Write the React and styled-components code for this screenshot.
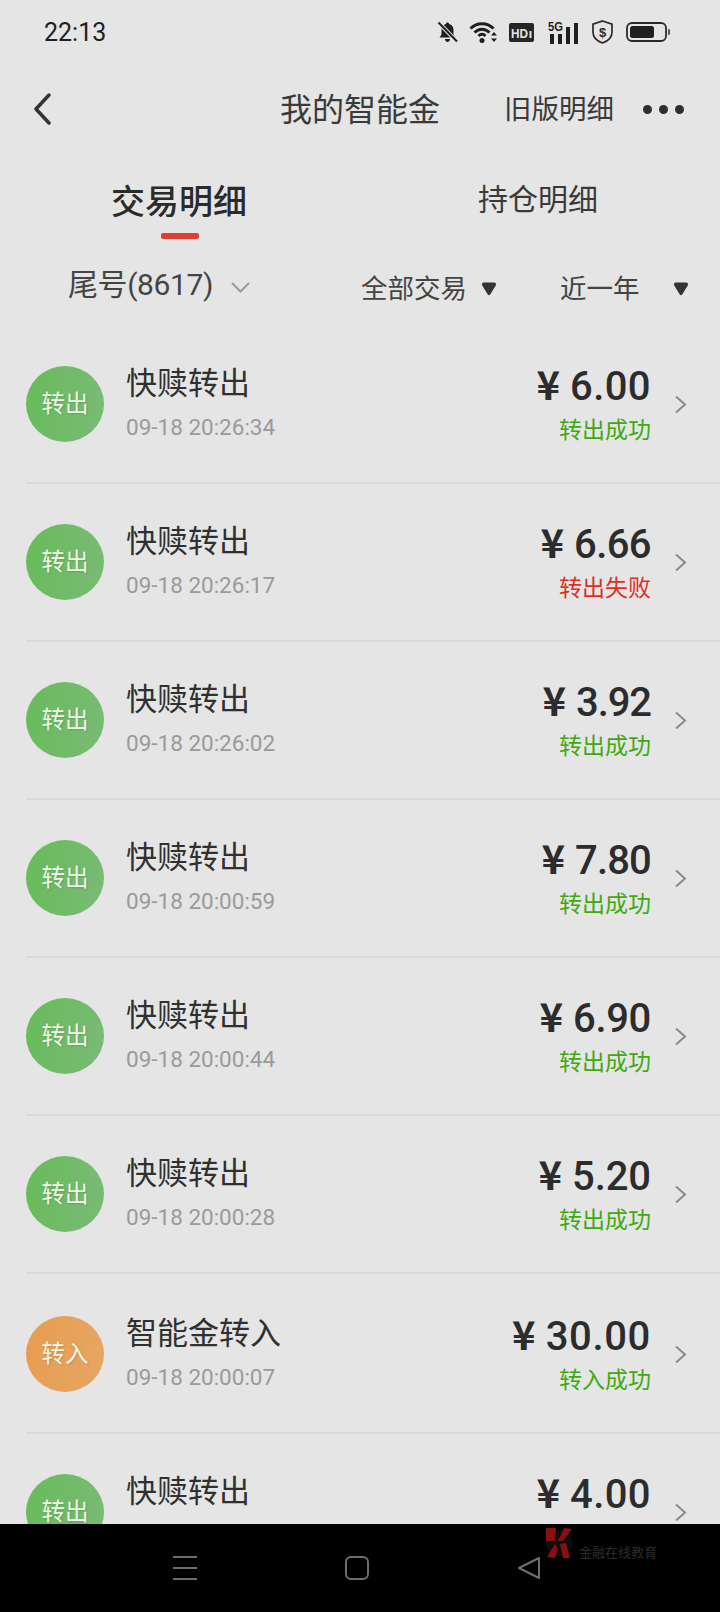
import React from "react";
import styled, { createGlobalStyle } from "styled-components";

const Global = createGlobalStyle`
  html, body { margin: 0; padding: 0; background: #e5e5e5; }
  body { font-family: Roboto, "Noto Sans CJK SC", sans-serif; }
`;

const Phone = styled.div`
  width: 720px; height: 1612px; display: flex; flex-direction: column;
  overflow: hidden; background: #e5e5e5; color: #2e2e2e;
`;
const StatusBar = styled.div`
  height: 64px; flex: none; display: flex; align-items: center;
  justify-content: space-between; padding: 1px 50px 0 44px; box-sizing: border-box;
`;
const Clock = styled.span`font-size: 25px; line-height: 63px; color: #1f1f1f; letter-spacing: 0;`;
const StatusIcons = styled.div`display: flex; align-items: center; margin-top: -1px;`;
const StatusSvg = styled.svg`display: block; margin-left: ${(p) => p.$gap || 0}px; flex: none;`;

const Header = styled.div`
  height: 90px; flex: none; display: flex; align-items: center; position: relative;
  padding: 0 36px 0 33px; box-sizing: border-box;
`;
const BackBtn = styled.svg`display: block; flex: none;`;
const HeaderTitle = styled.div`
  margin-left: 229px; font-size: 32px; line-height: 40px; color: #3a3a3a; white-space: nowrap;
  transform: translateY(1px);
`;
const OldLink = styled.div`
  margin-left: 64px; font-size: 27.5px; line-height: 40px; color: #3a3a3a; white-space: nowrap;
  transform: translateY(1px);
`;
const Dots = styled.div`
  margin-left: 29px; display: flex; gap: 7px; align-items: center;
`;
const Dot = styled.span`width: 9px; height: 9px; border-radius: 50%; background: #2e2e2e;`;

const Tabs = styled.div`height: 86px; flex: none; display: flex; position: relative;`;
const Tab = styled.div`
  position: absolute; top: ${(p) => p.$top}px; left: ${(p) => p.$left}px;
  font-size: ${(p) => (p.$active ? 34 : 30)}px; font-weight: ${(p) => (p.$active ? 500 : 400)};
  line-height: 40px; white-space: nowrap; color: ${(p) => (p.$active ? "#2b2b2b" : "#3a3a3a")};
`;
const TabMark = styled.div`
  position: absolute; left: 161px; top: 79px; width: 38px; height: 6px;
  border-radius: 2px; background: #dc4030;
`;

const Filters = styled.div`
  height: 86px; flex: none; display: flex; align-items: center; box-sizing: border-box;
  padding: 12px 32px 0 68px;
`;
const Account = styled.div`
  font-size: 30px; line-height: 40px; color: #444; white-space: nowrap; letter-spacing: -0.4px;
  margin-top: -8px;
`;
const AccountCaret = styled.svg`display: block; margin: -4px 0 0 18px; flex: none;`;
const FilterText = styled.div`
  margin-left: ${(p) => p.$ml}px; font-size: 26.5px; line-height: 36px; color: #444; white-space: nowrap;
`;
const FilterTri = styled.svg`display: block; margin-left: ${(p) => p.$ml}px; flex: none;`;

const List = styled.div`flex: 1; min-height: 0; overflow: hidden; padding-left: 26px;`;
const Row = styled.div`
  height: ${(p) => (p.$tall ? 160 : 158)}px; box-sizing: border-box; flex: none;
  padding-top: ${(p) => (p.$tall ? 42 : 40)}px; display: flex; align-items: flex-start;
  border-bottom: 2px solid #d9d9d9;
`;
const Badge = styled.div`
  width: 78px; height: 76px; border-radius: 50%; flex: none; display: flex;
  align-items: center; justify-content: center; font-size: 23.5px; line-height: 30px; color: #eef5e9;
  text-shadow: 1px 1px 2px rgba(0,0,0,.14);
  background: ${(p) => p.$in
    ? "linear-gradient(100deg,#e79d4f,#e6a665)"
    : "linear-gradient(100deg,#68bb59,#7abb78)"};
`;
const Info = styled.div`margin-left: 22px; margin-top: -1px; flex: 1; min-width: 0;`;
const Name = styled.div`font-size: 31px; line-height: 38px; color: #303030; white-space: nowrap;`;
const Time = styled.div`margin-top: 11px; font-size: 22.5px; line-height: 26px; color: #9a9a9a; white-space: nowrap;`;
const Right = styled.div`
  display: flex; flex-direction: column; align-items: flex-end; margin-top: -6px; flex: none;
`;
const Amount = styled.div`
  font-size: 40px; line-height: 46px; color: #2c2c2c; white-space: nowrap; font-weight: 500;
  letter-spacing: ${(p) => 0.4 - (p.$track || 0) / 4}px;
`;
const Yen = styled.span`
  margin-right: 10px; font-family: "Noto Sans CJK SC", sans-serif; font-weight: 700; letter-spacing: 0;
`;
const Status = styled.div`
  margin-top: 6px; font-size: 23px; line-height: 30px; white-space: nowrap;
  color: ${(p) => (p.$fail ? "#de2f25" : "#3fa90f")};
`;
const Chevron = styled.svg`display: block; margin: 29px 33px 0 23px; flex: none;`;

const NavBar = styled.div`
  height: 88px; flex: none; background: #000; position: relative; display: flex;
  align-items: flex-start; padding: 32px 0 0 173px; box-sizing: border-box;
`;
const NavIcon = styled.svg`display: block; flex: none; margin-right: ${(p) => p.$mr || 0}px;`;
const Watermark = styled.div`
  position: absolute; left: 545px; top: 3px; display: flex; align-items: flex-end;
`;
const WatermarkText = styled.span`
  margin-left: 7px; margin-bottom: -3px; font-size: 13px; line-height: 18px; color: #2c2c2c; letter-spacing: 0;
  white-space: nowrap;
`;

const rows = [
  { name: "快赎转出", time: "09-18 20:26:34", amount: "6.00", status: "转出成功", track: 0 },
  { name: "快赎转出", time: "09-18 20:26:17", amount: "6.66", status: "转出失败", fail: true, track: 4 },
  { name: "快赎转出", time: "09-18 20:26:02", amount: "3.92", status: "转出成功", track: 6 },
  { name: "快赎转出", time: "09-18 20:00:59", amount: "7.80", status: "转出成功", track: 5 },
  { name: "快赎转出", time: "09-18 20:00:44", amount: "6.90", status: "转出成功", track: 3 },
  { name: "快赎转出", time: "09-18 20:00:28", amount: "5.20", status: "转出成功", track: 2 },
  { name: "智能金转入", time: "09-18 20:00:07", amount: "30.00", status: "转入成功", track: -1 },
  { name: "快赎转出", amount: "4.00", track: 0 },
];

export default function App() {
  return (
    <Phone>
      <Global />
      <StatusBar>
        <Clock>22:13</Clock>
        <StatusIcons>
          <StatusSvg width="21" height="22" viewBox="0 0 21 22">
            <path d="M10.500 1.500c.9 0 1.600.7 1.600 1.500 2.900.7 4.400 3 4.400 6v4.500l2 3H2.500l2-3V9c0-3 1.600-5.300 4.400-6 0-.8.7-1.500 1.600-1.500zM8 18h5c0 1.600-1.100 3-2.500 3S8 19.600 8 18z" fill="#1f1f1f" />
            <path d="M1.500 1.500l18.500 19" stroke="#e5e5e5" strokeWidth="4" />
            <path d="M1.500 1.500l18.500 19" stroke="#1f1f1f" strokeWidth="2" />
          </StatusSvg>
          <StatusSvg $gap={11} width="29" height="22" viewBox="0 0 29 22">
            <path d="M1.500 7.500C8 1 18 1 24.500 7.500M5.500 11.500c4.500-4.500 10.500-4.500 15 0M9.500 15c2.300-2.300 4.700-2.300 7 0" fill="none" stroke="#1f1f1f" strokeWidth="3" />
            <circle cx="13" cy="19.500" r="2.500" fill="#1f1f1f" />
            <path d="M25 11l3 3.500h-6zM25 21l3-3.500h-6z" fill="#1f1f1f" />
          </StatusSvg>
          <StatusSvg $gap={11} width="25" height="19" viewBox="0 0 25 19">
            <rect width="25" height="19" rx="2" fill="#262626" />
            <text x="2" y="15" fontFamily="Liberation Sans, sans-serif" fontWeight="700" fontSize="13.500" fill="#e5e5e5" textLength="17" lengthAdjust="spacingAndGlyphs">HD</text>
            <rect x="20.500" y="8" width="2" height="7" fill="#e5e5e5" />
          </StatusSvg>
          <StatusSvg $gap={14} width="30" height="23" viewBox="0 0 30 23">
            <text x="0" y="10" fontFamily="Liberation Sans, sans-serif" fontWeight="700" fontSize="12" fill="#1f1f1f" textLength="15" lengthAdjust="spacingAndGlyphs">5G</text>
            <rect x="2" y="13" width="4" height="10" fill="#1f1f1f" />
            <rect x="10" y="13" width="4" height="10" fill="#1f1f1f" />
            <rect x="18" y="6" width="4" height="17" fill="#1f1f1f" />
            <rect x="26" y="2" width="4" height="21" fill="#1f1f1f" />
          </StatusSvg>
          <StatusSvg $gap={14} width="21" height="24" viewBox="0 0 21 24">
            <path d="M10.500 1L20 4.200v8c0 5-4 8.800-9.500 10.800C5 21 1 17.200 1 12.200v-8z" fill="none" stroke="#2a2a2a" strokeWidth="1.700" />
            <text x="10.500" y="16.500" textAnchor="middle" fontFamily="Liberation Sans, sans-serif" fontWeight="700" fontSize="13" fill="#2a2a2a">$</text>
          </StatusSvg>
          <StatusSvg $gap={13} width="44" height="20" viewBox="0 0 44 20">
            <rect x="1" y="1" width="39" height="18" rx="5" fill="none" stroke="#2a2a2a" strokeWidth="1.800" />
            <rect x="4" y="4" width="24" height="12" rx="2.500" fill="#1f1f1f" />
            <rect x="42" y="7" width="2" height="6" rx="1" fill="#555" />
          </StatusSvg>
        </StatusIcons>
      </StatusBar>

      <Header>
        <BackBtn width="18" height="32" viewBox="0 0 18 32">
          <path d="M16 2L3 16l13 14" fill="none" stroke="#333" strokeWidth="3.500" strokeLinecap="round" strokeLinejoin="round" />
        </BackBtn>
        <HeaderTitle>我的智能金</HeaderTitle>
        <OldLink>旧版明细</OldLink>
        <Dots><Dot /><Dot /><Dot /></Dots>
      </Header>

      <Tabs>
        <Tab $active $left={111} $top={28}>交易明细</Tab>
        <Tab $left={478} $top={26}>持仓明细</Tab>
        <TabMark />
      </Tabs>

      <Filters>
        <Account>尾号(8617)</Account>
        <AccountCaret width="19" height="11" viewBox="0 0 19 11">
          <path d="M1 1l8.500 8.500L18 1" fill="none" stroke="#9a9a9a" strokeWidth="2" />
        </AccountCaret>
        <FilterText $ml={111}>全部交易</FilterText>
        <FilterTri $ml={14} width="16" height="14" viewBox="0 0 16 14">
          <path d="M1 2.500C1 1 2 .5 3 .5h10c1 0 2 .5 2 2 0 .7-.3 1.300-.7 1.800L9.200 12.500c-.7 1-1.700 1-2.400 0L1.700 4.300C1.300 3.800 1 3.200 1 2.500z" fill="#333" />
        </FilterTri>
        <FilterText $ml={63}>近一年</FilterText>
        <FilterTri $ml={34} width="16" height="14" viewBox="0 0 16 14">
          <path d="M1 2.500C1 1 2 .5 3 .5h10c1 0 2 .5 2 2 0 .7-.3 1.300-.7 1.800L9.200 12.500c-.7 1-1.700 1-2.400 0L1.700 4.300C1.300 3.800 1 3.200 1 2.500z" fill="#333" />
        </FilterTri>
      </Filters>

      <List>
        {rows.map((r, i) => (
          <Row key={i} $tall={i === 6}>
            <Badge $in={r.name !== "快赎转出"}>{r.name === "快赎转出" ? "转出" : "转入"}</Badge>
            <Info>
              <Name>{r.name}</Name>
              {r.time && <Time>{r.time}</Time>}
            </Info>
            <Right>
              <Amount $track={r.track}><Yen>¥</Yen>{r.amount}</Amount>
              {r.status && <Status $fail={r.fail}>{r.status}</Status>}
            </Right>
            <Chevron width="13" height="19" viewBox="0 0 13 19">
              <path d="M2 1.500l9 8-9 8" fill="none" stroke="#8a8a8a" strokeWidth="2" />
            </Chevron>
          </Row>
        ))}
      </List>

      <NavBar>
        <NavIcon $mr={148} width="24" height="24" viewBox="0 0 24 24">
          <path d="M0 1h24M0 12h24M0 23h24" stroke="#6e6e6e" strokeWidth="2" />
        </NavIcon>
        <NavIcon $mr={148} width="24" height="24" viewBox="0 0 24 24">
          <rect x="1" y="1" width="22" height="22" rx="5" fill="none" stroke="#6e6e6e" strokeWidth="2" />
        </NavIcon>
        <NavIcon width="24" height="24" viewBox="0 0 24 24">
          <path d="M22 2v20L2 12z" fill="none" stroke="#6e6e6e" strokeWidth="2" strokeLinejoin="round" />
        </NavIcon>
        <Watermark>
          <svg width="27" height="32" viewBox="0 0 27 32">
            <circle cx="14" cy="16" r="13" fill="#0d0d0d" />
            <path d="M1 1l10 0-1 13-9 0zM19 1l8 1-9 12-5 0zM10 17l3 5-3 9-8-1zM15 17l6-1 4 15-7 0z" fill="#8a1010" />
          </svg>
          <WatermarkText>金融在线教育</WatermarkText>
        </Watermark>
      </NavBar>
    </Phone>
  );
}
